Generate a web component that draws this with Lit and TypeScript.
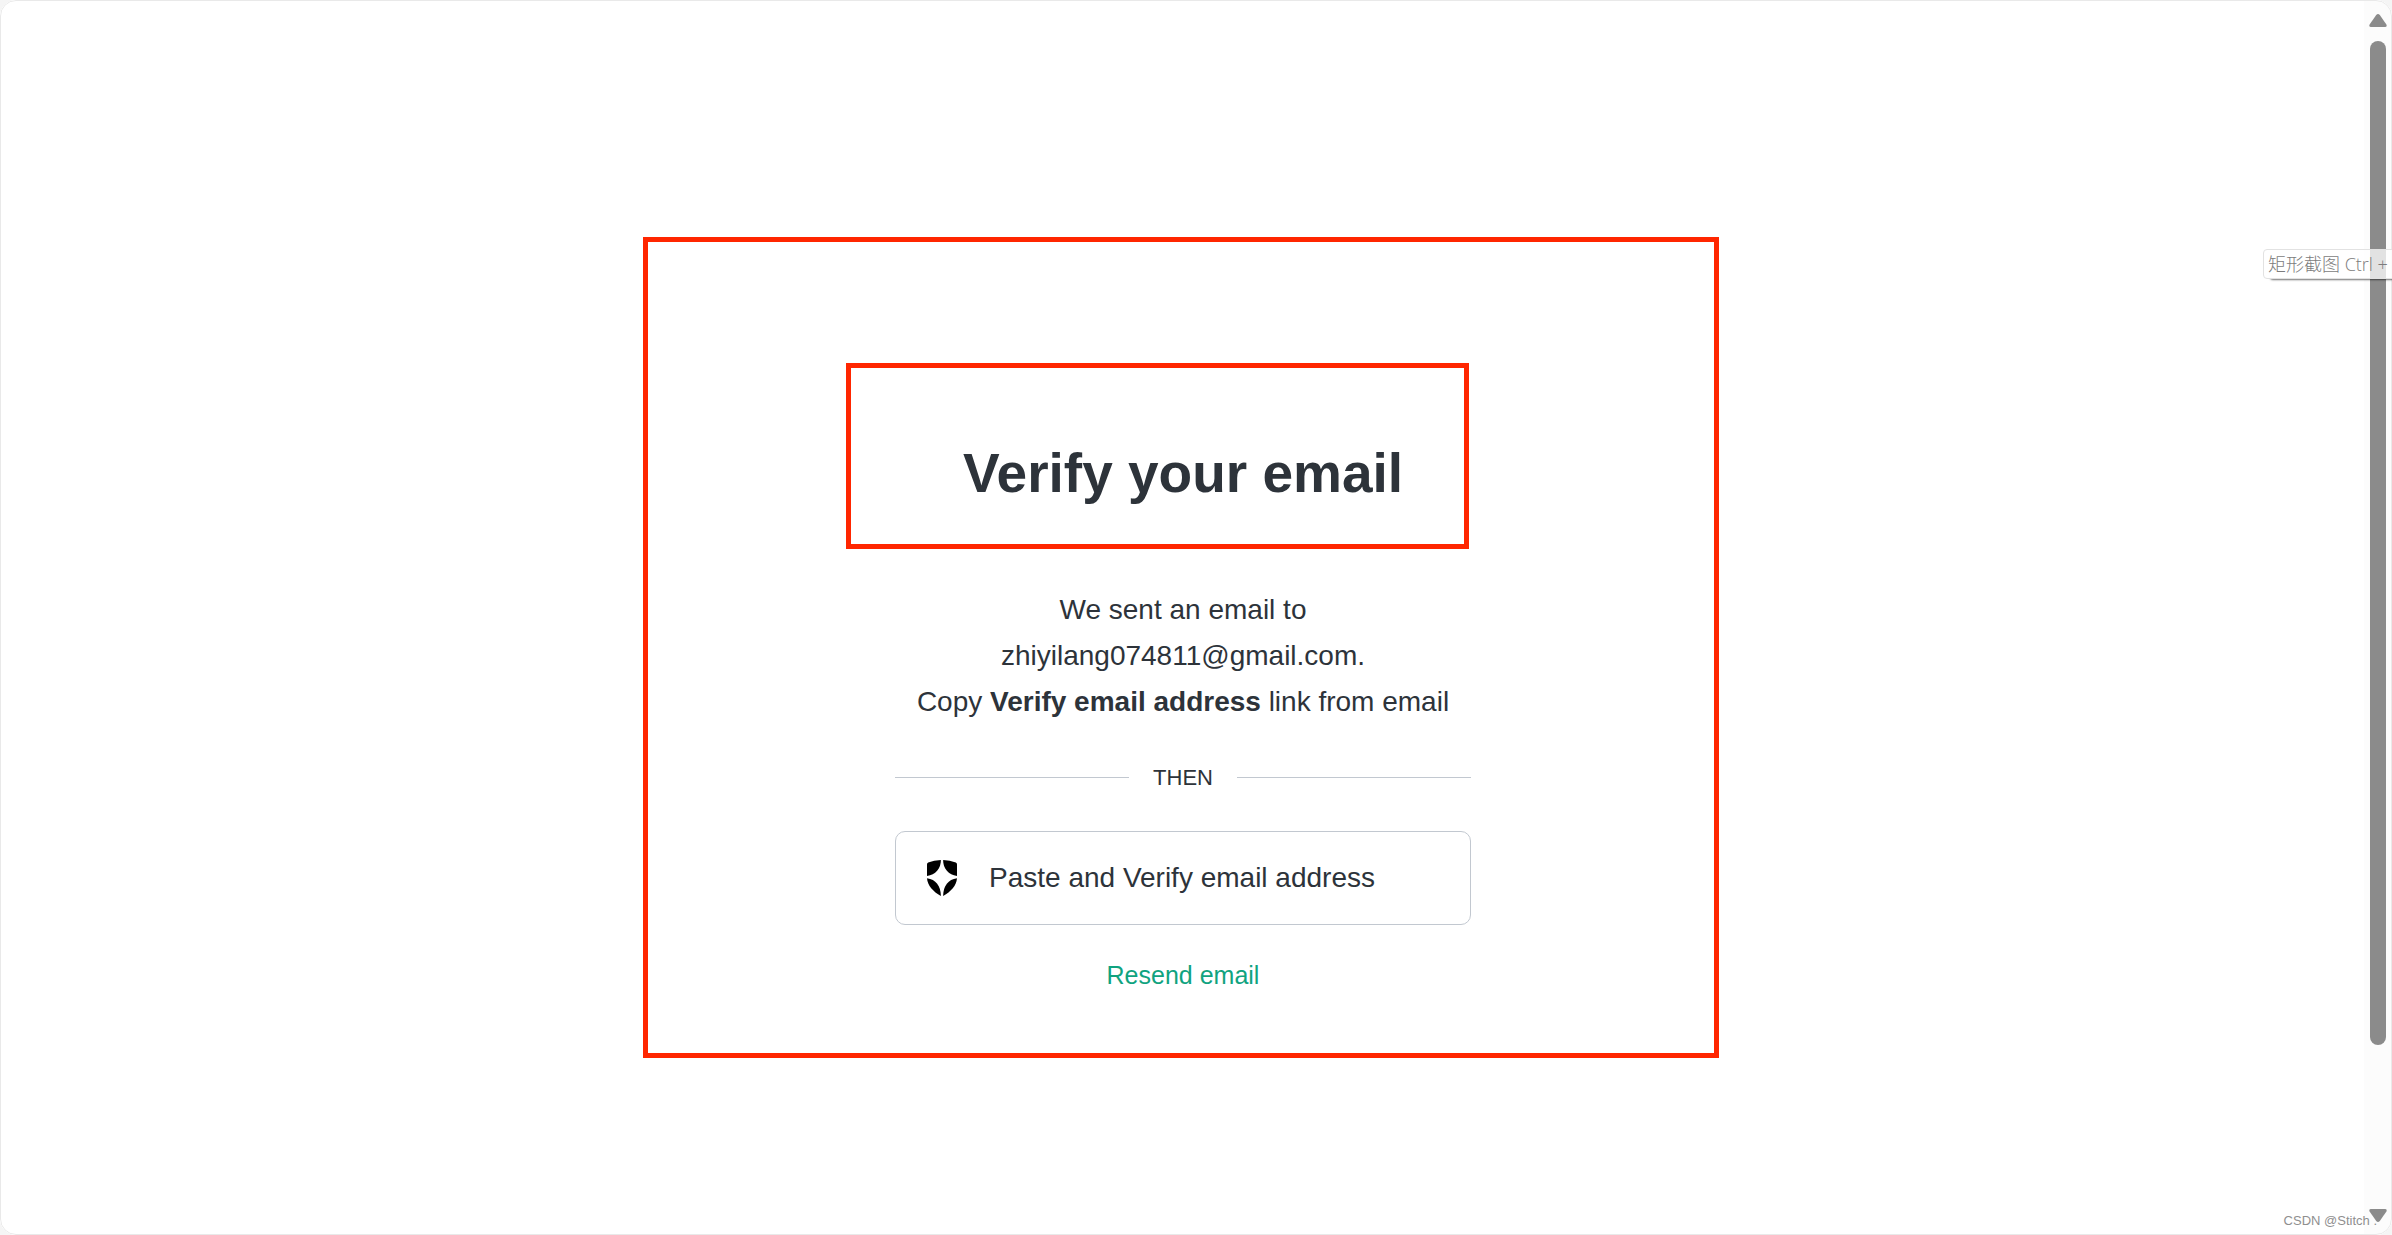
import { LitElement, html, css } from "lit";
import { customElement } from "lit/decorators.js";

@customElement("page-scrollbar")
class PageScrollbar extends LitElement {
  static styles = css`
    :host {
      display: flex;
      flex-direction: column;
      align-items: center;
      box-sizing: border-box;
      width: 28px;
      padding: 14px 0 13px;
      background: #fcfcfc;
    }
    .arrow {
      display: block;
      flex: none;
      width: 18px;
      height: 14px;
      fill: #8b8b8b;
    }
    .track {
      flex: 1;
      display: flex;
      justify-content: center;
      margin: 13px 0;
    }
    .thumb {
      width: 16px;
      height: 87%;
      border-radius: 8px;
      background: #8b8b8b;
    }
  `;
  render() {
    return html`
      <svg class="arrow" viewBox="0 0 18 14" aria-hidden="true">
        <path d="M7.2 1Q9 -.8 10.8 1L17.4 10.6Q18.4 13 16 13H2Q-.4 13 .6 10.6Z" />
      </svg>
      <div class="track"><div class="thumb"></div></div>
      <svg class="arrow" viewBox="0 0 18 14" aria-hidden="true">
        <path d="M7.2 13Q9 14.8 10.8 13L17.4 3.4Q18.4 1 16 1H2Q-.4 1 .6 3.4Z" />
      </svg>
    `;
  }
}

@customElement("verify-email")
class VerifyEmail extends LitElement {
  static styles = css`
    :host {
      display: block;
      position: relative;
      width: 576px;
      color: #2d333a;
      font-size: 28px;
      line-height: 46px;
      text-align: center;
    }
    .title {
      margin: 0 0 82px;
      font-size: 55px;
      line-height: 64px;
      font-weight: 700;
    }
    .message {
      margin: 0 0 39px;
    }
    .divider {
      display: flex;
      align-items: center;
      gap: 24px;
      margin-bottom: 40px;
      font-size: 22px;
      line-height: 27px;
    }
    .divider::before,
    .divider::after {
      content: "";
      flex: 1;
      height: 1px;
      background: #c2c8d0;
    }
    .paste {
      display: flex;
      align-items: center;
      gap: 32px;
      box-sizing: border-box;
      width: 100%;
      padding: 23px 31px;
      border: 1px solid #c2c8d0;
      border-radius: 10px;
      background: #fff;
      color: inherit;
      font: inherit;
      text-align: left;
    }
    .shield {
      display: block;
      width: 30px;
      height: 36px;
    }
    .resend {
      display: inline-block;
      margin-top: 34px;
      color: #10a37f;
      font-size: 25px;
      line-height: 32px;
      text-decoration: none;
    }
    .frame {
      position: absolute;
      box-sizing: border-box;
      border: 5px solid #ff2600;
      pointer-events: none;
    }
    .frame.outer {
      top: -204px;
      left: -252px;
      right: -248px;
      height: 821px;
    }
    .frame.inner {
      top: -78px;
      left: -49px;
      right: 2px;
      height: 186px;
    }
  `;
  render() {
    return html`
      <h1 class="title">Verify your email</h1>
      <p class="message">
        We sent an email to<br />
        zhiyilang074811@gmail.com.<br />
        Copy <strong>Verify email address</strong> link from email
      </p>
      <div class="divider">THEN</div>
      <button class="paste" type="button">
        <svg class="shield" viewBox="0 0 30 36" aria-hidden="true">
          <path d="M13.9 0C13.9 8.5 8.5 14.8 0 16V4.2Q0 3 1.2 2.5Q7 .1 13.9 0Z" />
          <path d="M16.1 0C16.1 8.5 21.5 14.8 30 16V4.2Q30 3 28.8 2.5Q23 .1 16.1 0Z" />
          <path d="M0 18.2C8.8 19.2 13.7 25.8 13.9 36C6 31.5 .6 25.5 0 18.2Z" />
          <path d="M30 18.2C21.2 19.2 16.3 25.8 16.1 36C24 31.5 29.4 25.5 30 18.2Z" />
        </svg>
        <span>Paste and Verify email address</span>
      </button>
      <a class="resend" href="#resend">Resend email</a>
      <div class="frame outer"></div>
      <div class="frame inner"></div>
    `;
  }
}

@customElement("app-root")
class AppRoot extends LitElement {
  static styles = css`
    :host {
      display: block;
      position: relative;
      overflow: hidden;
      background: #f5f5f5;
      font-family: "Liberation Sans", Arial, sans-serif;
    }
    .window {
      display: flex;
      position: relative;
      min-height: 100vh;
      overflow: hidden;
      border-radius: 16px;
      background: #fff;
    }
    .window::after {
      content: "";
      position: absolute;
      inset: 0;
      border: 1px solid #e9e9e9;
      border-radius: 16px;
      pointer-events: none;
    }
    .page {
      flex: 1;
      display: flex;
      justify-content: center;
      align-items: flex-start;
      padding: 441px 0 176px 2px;
    }
    .tooltip {
      position: absolute;
      top: 249px;
      right: -60px;
      box-sizing: border-box;
      width: 189px;
      padding: 1px 4px;
      border: 1px solid #e2e2e2;
      border-radius: 4px;
      background: rgba(255, 255, 255, 0.75);
      box-shadow: 6px 2px 2px -1px rgba(0, 0, 0, 0.55);
      color: #7c7c7c;
      font-family: "Open Sans", "Noto Sans CJK SC", sans-serif;
      font-size: 18px;
      font-weight: 300;
      line-height: 26px;
      white-space: nowrap;
    }
    .watermark {
      position: absolute;
      right: 15px;
      bottom: 5px;
      color: #8f8f8f;
      font-size: 13px;
      line-height: 18px;
      text-shadow: 1px 1px 0 #fff;
    }
  `;
  render() {
    return html`
      <div class="window">
        <main class="page"><verify-email></verify-email></main>
        <page-scrollbar></page-scrollbar>
      </div>
      <div class="tooltip" role="tooltip">矩形截图 Ctrl +</div>
      <div class="watermark">CSDN @Stitch .</div>
    `;
  }
}
